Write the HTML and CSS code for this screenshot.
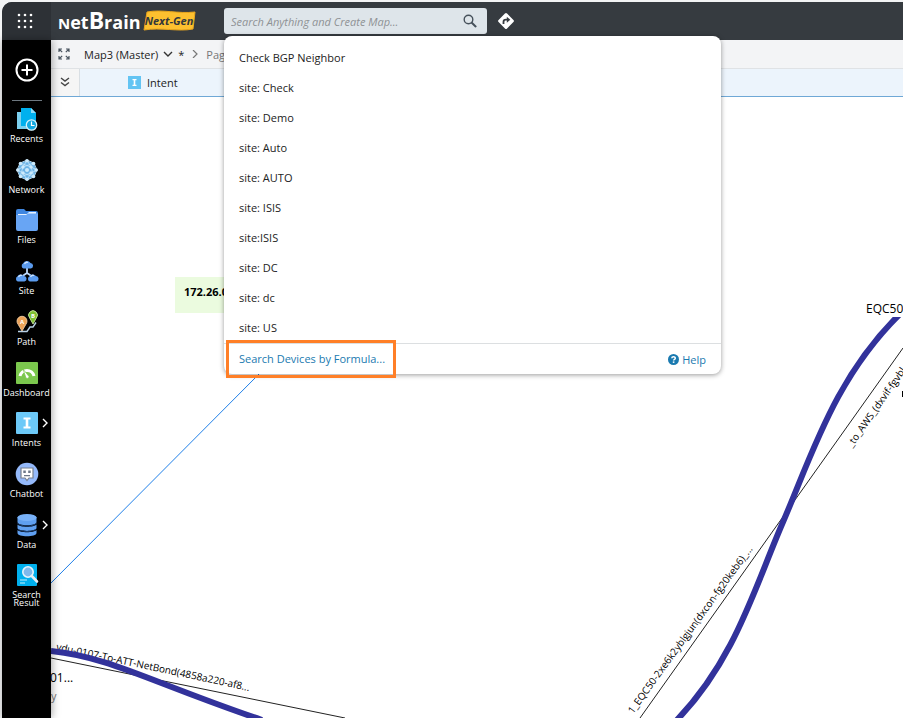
FILE: index.html
```
<!DOCTYPE html>
<html lang="en">

<head>
    <meta charset="UTF-8">
    <meta name="viewport" content="width=device-width, initial-scale=1.0">
    <title>NetBrain Map</title>
    <link rel="stylesheet" href="styles.css">
</head>

<body>
    <div class="app">
        <!-- Top bar -->
        <header class="topbar">
            <button class="apps-btn" aria-label="Applications">
                <svg width="18" height="18" viewBox="0 0 18 18" fill="#fff">
                    <circle cx="3" cy="3" r="1.3"/><circle cx="9" cy="3" r="1.3"/><circle cx="15" cy="3" r="1.3"/>
                    <circle cx="3" cy="9" r="1.3"/><circle cx="9" cy="9" r="1.3"/><circle cx="15" cy="9" r="1.3"/>
                    <circle cx="3" cy="15" r="1.3"/><circle cx="9" cy="15" r="1.3"/><circle cx="15" cy="15" r="1.3"/>
                </svg>
            </button>
            <div class="brand">
                <span class="logo"><span class="logo-n">N</span>et<span class="logo-b">B</span>rain</span>
                <svg class="badge" width="54" height="24" viewBox="0 0 54 24">
                    <path d="M4 3C19 0 35 5 52 3L50 20C35 23 18 18 1 21Z" fill="#fdc02f" stroke="#e9a61c"/>
                    <text x="26" y="16" class="badge-text">Next-Gen</text>
                </svg>
            </div>
            <div class="search">
                <div class="search-box">
                    <input type="text" class="search-input" aria-label="Search" placeholder="Search Anything and Create Map...">
                    <button class="icon-btn" aria-label="Search">
                        <svg width="14" height="14" viewBox="0 0 14 14" fill="none" stroke="#46515b">
                            <circle cx="5.5" cy="5.5" r="4.3" stroke-width="1.4"/>
                            <path d="M8.8 8.8L12.6 12.4" stroke-width="2" stroke-linecap="round"/>
                        </svg>
                    </button>
                </div>

                <!-- Suggestions -->
                <div class="dropdown">
                    <ul class="suggestions">
                        <li>Check BGP Neighbor</li>
                        <li>site: Check</li>
                        <li>site: Demo</li>
                        <li>site: Auto</li>
                        <li>site: AUTO</li>
                        <li>site: ISIS</li>
                        <li>site:ISIS</li>
                        <li>site: DC</li>
                        <li>site: dc</li>
                        <li>site: US</li>
                    </ul>
                    <div class="dropdown-footer">
                        <a href="#" class="formula-link">Search Devices by Formula...</a>
                        <a href="#" class="help-link">
                            <svg width="11" height="11" viewBox="0 0 11 11">
                                <circle cx="5.5" cy="5.5" r="5.5" fill="#1a7ab0"/>
                                <path d="M3.8 4.3C3.8 2.2 7.3 2.2 7.3 4.2C7.3 5.4 5.6 5.3 5.6 6.6" fill="none" stroke="#fff" stroke-width="1.5"/>
                                <rect x="4.8" y="7.4" width="1.6" height="1.5" fill="#fff"/>
                            </svg>
                            Help
                        </a>
                    </div>
                </div>
            </div>
            <button class="icon-btn go-btn" aria-label="Directions">
                <svg width="18" height="18" viewBox="0 0 18 18">
                    <rect x="3" y="3" width="12" height="12" rx="1.5" fill="#fff" transform="rotate(45 9 9)"/>
                    <path d="M6.5 12V10C6.5 8.3 7.4 7.7 9 7.7H10.5" fill="none" stroke="#363b40" stroke-width="1.8"/>
                    <path d="M9.8 4.8L13.3 7.8L9.8 10.8Z" fill="#363b40"/>
                </svg>
            </button>
        </header>

        <div class="body">
            <!-- Side menu -->
            <nav class="sidebar">
                <button class="add-btn" aria-label="New">
                    <svg width="24" height="24" viewBox="0 0 24 24" fill="none" stroke="#fff" stroke-width="2">
                        <circle cx="12" cy="12" r="10.5"/>
                        <path d="M12 6.5V17.5M6.5 12H17.5"/>
                    </svg>
                </button>
                <ul class="menu">
                    <li><a href="#" class="menu-item">
                        <svg width="24" height="24" viewBox="0 0 24 24">
                            <path d="M2 5H14V22H2Z" fill="#7ccfee"/>
                            <path d="M6 1H16L21 6V19H6Z" fill="#00b0ee"/>
                            <path d="M16 1V6H21Z" fill="#8fdcf8"/>
                            <circle cx="16.5" cy="18" r="5.2" fill="#12a9e2" stroke="#d8f1fb" stroke-width="1.3"/>
                            <path d="M16.5 14.5V18.5H19.5" fill="none" stroke="#fff" stroke-width="1.2"/>
                        </svg>
                        Recents</a></li>
                    <li><a href="#" class="menu-item">
                        <svg width="24" height="24" viewBox="0 0 24 24">
                            <circle cx="12" cy="12" r="9.2" fill="#6cb3e6"/>
                            <g stroke="#c7e6fa" stroke-width=".8" fill="none">
                                <path d="M12 2L19 5L22 12L19 19L12 22L5 19L2 12L5 5Z"/>
                                <path d="M12 2L8 9L2 12L8 15L12 22L16 15L22 12L16 9Z"/>
                                <path d="M5 5L16 9L19 19M19 5L8 9L5 19M8 15L19 19M16 15L5 19"/>
                            </g>
                            <g fill="#cdeafc">
                                <circle cx="12" cy="2.8" r="1.8"/><circle cx="18.5" cy="5.5" r="1.8"/><circle cx="21.2" cy="12" r="1.8"/>
                                <circle cx="18.5" cy="18.5" r="1.8"/><circle cx="12" cy="21.2" r="1.8"/><circle cx="5.5" cy="18.5" r="1.8"/>
                                <circle cx="2.8" cy="12" r="1.8"/><circle cx="5.5" cy="5.5" r="1.8"/><circle cx="8" cy="9" r="1.7"/>
                                <circle cx="16" cy="9" r="1.7"/><circle cx="8" cy="15" r="1.7"/><circle cx="16" cy="15" r="1.7"/>
                                <circle cx="12" cy="12" r="2"/>
                            </g>
                        </svg>
                        Network</a></li>
                    <li><a href="#" class="menu-item">
                        <svg width="24" height="24" viewBox="0 0 24 24">
                            <path d="M1 3Q1 1 3 1H9L11 3H21Q23 3 23 5V10H1Z" fill="#3f86e0"/>
                            <path d="M3 6H12L14 4H21V10H3Z" fill="#e8f2ff"/>
                            <path d="M1 7H11L13 5.5H23V21Q23 23 21 23H3Q1 23 1 21Z" fill="#68a5f4"/>
                        </svg>
                        Files</a></li>
                    <li><a href="#" class="menu-item">
                        <svg width="24" height="24" viewBox="0 0 24 24">
                            <path d="M12 9V14L6 18M12 14L18 18" fill="none" stroke="#bcd8fa" stroke-width="1.8"/>
                            <g fill="#5b9bee">
                                <path d="M8.5 9.5A2.8 2.8 0 0 1 8 4.5A4.3 4.3 0 0 1 15.5 4A2.8 2.8 0 0 1 16 9.5Z"/>
                                <path d="M2.8 22.5A2.8 2.8 0 0 1 2.3 17.5A4 4 0 0 1 9 17A2.8 2.8 0 0 1 9.5 22.5Z"/>
                                <path d="M14.8 22.5A2.8 2.8 0 0 1 14.3 17.5A4 4 0 0 1 21 17A2.8 2.8 0 0 1 21.5 22.5Z"/>
                            </g>
                            <path d="M9.5 5Q11 2.5 13 3.5M3.5 18Q5 15.5 7 16.5M15.5 18Q17 15.5 19 16.5" fill="none" stroke="#cfe3fc" stroke-width="1.3"/>
                        </svg>
                        Site</a></li>
                    <li><a href="#" class="menu-item">
                        <svg width="24" height="24" viewBox="0 0 24 24">
                            <path d="M3 21.5H12L15 17H18L21 12.5" fill="none" stroke="#b6cfe4" stroke-width="1.4"/>
                            <path d="M7 21L3.2 14.5A5 5 0 1 1 10.8 14.5Z" fill="#eba257" stroke="#f7d5ad" stroke-width=".8"/>
                            <path d="M18 14L14.7 8A4.4 4.4 0 1 1 21.3 8Z" fill="#7fc131" stroke="#d3efac" stroke-width=".8"/>
                            <text x="7" y="14" class="pin">A</text>
                            <text x="18" y="8" class="pin">B</text>
                        </svg>
                        Path</a></li>
                    <li><a href="#" class="menu-item">
                        <svg width="24" height="24" viewBox="0 0 24 24">
                            <rect x="1" y="1" width="22" height="22" rx="1" fill="#7bc74d"/>
                            <path d="M5 15A7.2 7.2 0 0 1 19 15" fill="none" stroke="#fff" stroke-width="3"/>
                            <path d="M8 8L14 15.5A1.8 1.8 0 0 1 11 17Z" fill="#fff" stroke="#7bc74d" stroke-width=".7"/>
                        </svg>
                        Dashboard</a></li>
                    <li><a href="#" class="menu-item">
                        <svg width="24" height="24" viewBox="0 0 24 24">
                            <rect x="1" y="1" width="22" height="22" rx="1" fill="#6cc9f8"/>
                            <path d="M8.5 6.5H15.5V8.5H13.3V15.5H15.5V17.5H8.5V15.5H10.7V8.5H8.5Z" fill="#fff"/>
                        </svg>
                        Intents
                        <svg class="arrow" width="6" height="10" viewBox="0 0 6 10"><path d="M1 1L5 5L1 9" fill="none" stroke="#fff" stroke-width="1.4"/></svg></a></li>
                    <li><a href="#" class="menu-item">
                        <svg width="24" height="24" viewBox="0 0 24 24">
                            <circle cx="12" cy="12" r="11.3" fill="#94b9fa"/>
                            <path d="M6 6H18V16H14L12 18.5L10 16H6Z" fill="#fff" stroke="#77808e" stroke-width="1.2"/>
                            <path d="M8.3 8.5H10.8V11H8.3ZM13.2 8.5H15.7V11H13.2ZM9 13H15V14.2H9Z" fill="#6d7888"/>
                        </svg>
                        Chatbot</a></li>
                    <li><a href="#" class="menu-item">
                        <svg width="24" height="24" viewBox="0 0 24 24">
                            <g fill="#5f9ff0">
                                <path d="M2.5 17C5 20 19 20 21.5 17V20C21.5 24.3 2.5 24.3 2.5 20Z"/>
                                <path d="M2.5 11.5C5 14.5 19 14.5 21.5 11.5V14.8C21.5 19 2.5 19 2.5 14.8Z"/>
                                <path d="M2.5 4V9C2.5 13.3 21.5 13.3 21.5 9V4Z"/>
                            </g>
                            <path d="M2.5 10C4 14 20 14 21.5 10M2.5 15.5C4 19.5 20 19.5 21.5 15.5" fill="none" stroke="#1d3f70"/>
                            <ellipse cx="12" cy="4.5" rx="9.6" ry="3.6" fill="#78b1f8"/>
                        </svg>
                        Data
                        <svg class="arrow" width="6" height="10" viewBox="0 0 6 10"><path d="M1 1L5 5L1 9" fill="none" stroke="#fff" stroke-width="1.4"/></svg></a></li>
                    <li><a href="#" class="menu-item">
                        <svg width="24" height="24" viewBox="0 0 24 24">
                            <rect x="2" y="1" width="20" height="22" rx="1" fill="#00b0ee"/>
                            <path d="M5 17H12M5 20H10" stroke="#c4edfc" stroke-width="1.2"/>
                            <circle cx="13" cy="9" r="5.2" fill="#7fb9ec" stroke="#e6f4fc" stroke-width="1.6"/>
                            <path d="M16.8 13L22 18.5" stroke="#e6eef5" stroke-width="2.6" stroke-linecap="round"/>
                        </svg>
                        Search Result</a></li>
                </ul>
            </nav>

            <main class="workspace">
                <div class="crumbs">
                    <button class="icon-btn" aria-label="Full screen">
                        <svg width="12" height="12" viewBox="0 0 12 12" fill="none" stroke="#4a5560" stroke-width="1.2">
                            <path d="M1 4V1H4M8 1H11V4M11 8V11H8M4 11H1V8M1 1L4.2 4.2M11 1L7.8 4.2M11 11L7.8 7.8M1 11L4.2 7.8"/>
                        </svg>
                    </button>
                    <button class="map-name">Map3 (Master)
                        <svg width="10" height="6" viewBox="0 0 10 6"><path d="M1 1L5 5L9 1" fill="none" stroke="#333" stroke-width="1.4"/></svg>
                        *</button>
                    <svg width="6" height="8" viewBox="0 0 6 8"><path d="M1 0L5 4L1 8" fill="none" stroke="#777" stroke-width="1.2"/></svg>
                    <a href="#" class="page-link">Page 1</a>
                </div>
                <div class="tabs">
                    <button class="collapse-btn" aria-label="Collapse">
                        <svg width="10" height="10" viewBox="0 0 10 10" fill="none" stroke="#444" stroke-width="1.4"><path d="M1 1L5 4L9 1M1 5.5L5 8.5L9 5.5"/></svg>
                    </button>
                    <button class="tab">
                        <svg width="13" height="13" viewBox="0 0 13 13">
                            <rect width="13" height="13" fill="#63c4f3"/>
                            <path d="M4.5 3H8.5V4.3H7.3V8.7H8.5V10H4.5V8.7H5.7V4.3H4.5Z" fill="#fff"/>
                        </svg>
                        Intent
                    </button>
                </div>

                <!-- Map canvas -->
                <div class="canvas">
                    <svg class="map" width="100%" height="100%">
                        <clipPath id="below-node"><rect y="220" width="100%" height="100%"/></clipPath>
                        <rect x="124" y="180" width="90" height="36" fill="#ebfbdf"/>
                        <text x="133" y="199" class="node-ip">172.26.0.1</text>
                        <line x1="0" y1="486" x2="214" y2="271" class="link-blue"/>
                        <path d="M0 561L294 621M589 621L852 251" class="link-thin"/>
                        <text transform="translate(198 594) rotate(12)" text-anchor="end" class="link-label">ydu-0107-To-ATT-NetBond(4858a220-af8...</text>
                        <text transform="translate(702 452) rotate(-54)" text-anchor="end" class="link-label">1_EQC50-2xe6k2yblgjun(dxcon-fg20keb6)_...</text>
                        <text transform="translate(801 351) rotate(-55)" class="link-label">_to_AWS_(dxvif-fgvbl</text>
                        <g class="link-thick" clip-path="url(#below-node)">
                            <path d="M0 554C59 560 99 585 211 623"/>
                            <path d="M852 214C784 279 761 358 732 425S684 563 625 624"/>
                        </g>
                        <text x="-1" y="585" class="node-name">01...</text>
                        <text x="0" y="603" class="node-type">y</text>
                        <text x="815" y="216" class="node-name">EQC50</text>
                        <rect x="851" y="294" width="6" height="6"/>
                    </svg>
                </div>
            </main>
        </div>
    </div>
</body>

</html>
```
FILE: styles.css
```
/* Base styles */
* {
    box-sizing: border-box;
}

body {
    margin: 0;
    padding: 2px 0 0 2px;
    background: #f3f4f5;
    font-family: "Open Sans", "Noto Sans", sans-serif;
    font-size: 11px;
    color: #222;
}

button {
    padding: 0;
    border: none;
    background: none;
    font: inherit;
    color: inherit;
    cursor: pointer;
}

a {
    text-decoration: none;
}

ul {
    list-style: none;
    margin: 0;
    padding: 0;
}

svg {
    flex: none;
}

.app {
    display: flex;
    flex-direction: column;
    height: calc(100vh - 2px);
}

/* Top bar */
.topbar {
    display: flex;
    align-items: center;
    height: 38px;
    flex: none;
    background: #363b40;
    border-top-left-radius: 10px;
}

.apps-btn {
    display: flex;
    align-items: center;
    justify-content: center;
    width: 49px;
    height: 100%;
    padding-right: 4px;
    background: #2d3136;
    border-top-left-radius: 10px;
}

.brand {
    display: flex;
    align-items: center;
    width: 173px;
    padding-left: 7px;
    gap: 3px;
}

.logo {
    width: 82px;
    color: #fff;
    font-size: 18px;
    font-weight: 700;
    line-height: 34px;
    white-space: nowrap;
}

.logo-n {
    font-size: 15px;
}

.logo-b {
    font-size: 23px;
}

.badge-text {
    font-size: 11px;
    font-weight: 700;
    font-style: italic;
    text-anchor: middle;
    fill: #33373b;
}

.icon-btn {
    display: flex;
    align-items: center;
}

.go-btn {
    margin-left: 10px;
}

/* Search */
.search {
    position: relative;
    width: 263px;
}

.search-box {
    display: flex;
    align-items: center;
    height: 26px;
    padding: 0 10px 0 7px;
    background: #dee5ea;
    border-radius: 3px;
}

.search-input {
    flex: 1;
    min-width: 0;
    padding: 0;
    border: none;
    outline: none;
    background: none;
    font: italic 11px "Open Sans", sans-serif;
}

.search-input::placeholder {
    color: #8e9295;
}

.dropdown {
    position: absolute;
    top: 28px;
    left: 0;
    z-index: 5;
    width: 497px;
    background: #fff;
    border-radius: 8px;
    box-shadow: 0 1px 5px rgba(0, 0, 0, 0.4);
}

.suggestions {
    padding-top: 7px;
}

.suggestions li {
    height: 30px;
    padding-left: 15px;
    line-height: 30px;
}

.dropdown-footer {
    display: flex;
    align-items: center;
    justify-content: space-between;
    height: 31px;
    padding: 0 15px 0 2px;
    border-top: 1px solid #dcdfe1;
}

.formula-link,
.help-link {
    color: #1a7ab0;
}

.formula-link {
    padding: 0 8px 0 10px;
    border: 3px solid #ff7f27;
    line-height: 32px;
}

.help-link {
    display: flex;
    align-items: center;
    gap: 3px;
}

/* Side menu */
.body {
    display: flex;
    flex: 1;
    min-height: 0;
}

.sidebar {
    z-index: 2;
    display: flex;
    flex-direction: column;
    align-items: center;
    width: 49px;
    flex: none;
    background: #000;
    box-shadow: 1px 0 8px rgba(0, 0, 0, 0.35);
}

.add-btn {
    display: flex;
    align-items: center;
    justify-content: center;
    width: 30px;
    height: 61px;
    border-bottom: 1px solid #6e7880;
}

.menu {
    display: flex;
    flex-direction: column;
    width: 100%;
    height: 507px;
    margin-top: 6px;
}

.menu li {
    flex: 1;
    min-height: 0;
}

.menu-item {
    position: relative;
    display: flex;
    flex-direction: column;
    align-items: center;
    gap: 4px;
    color: #fff;
    font-size: 9px;
    line-height: 8px;
    text-align: center;
}

.arrow {
    position: absolute;
    top: 7px;
    right: 3px;
}

.pin {
    font-size: 6px;
    font-weight: 700;
    text-anchor: middle;
    fill: #fff;
}

/* Workspace */
.workspace {
    display: flex;
    flex-direction: column;
    flex: 1;
    min-width: 0;
    background: #fff;
}

.crumbs {
    display: flex;
    align-items: center;
    gap: 8px;
    height: 29px;
    padding-left: 7px;
    background: #f3f4f6;
    border-bottom: 1px solid #dfe2e5;
}

.map-name {
    display: flex;
    align-items: center;
    gap: 5px;
    padding-left: 6px;
}

.page-link {
    color: #777;
}

.tabs {
    display: flex;
    height: 28px;
    background: #ecf4fc;
    border-bottom: 1px solid #6fa8d6;
}

.collapse-btn {
    width: 29px;
    background: #f5f5f5;
    border-right: 1px solid #d9dfe4;
}

.tab {
    display: flex;
    align-items: center;
    gap: 6px;
    padding-left: 48px;
}

/* Map canvas */
.canvas {
    flex: 1;
    min-height: 0;
    overflow: hidden;
}

.map {
    display: block;
}

.link-blue {
    stroke: #1e7fe8;
    stroke-width: 1px;
}

.link-thin {
    fill: none;
    stroke: #222;
}

.link-thick {
    fill: none;
    stroke: #32329b;
    stroke-width: 6px;
}

.link-label {
    font-size: 10px;
}

.node-name {
    font-size: 12px;
}

.node-type {
    font-size: 11px;
    fill: #777;
}

.node-ip {
    font-size: 11px;
    font-weight: 700;
}
```
